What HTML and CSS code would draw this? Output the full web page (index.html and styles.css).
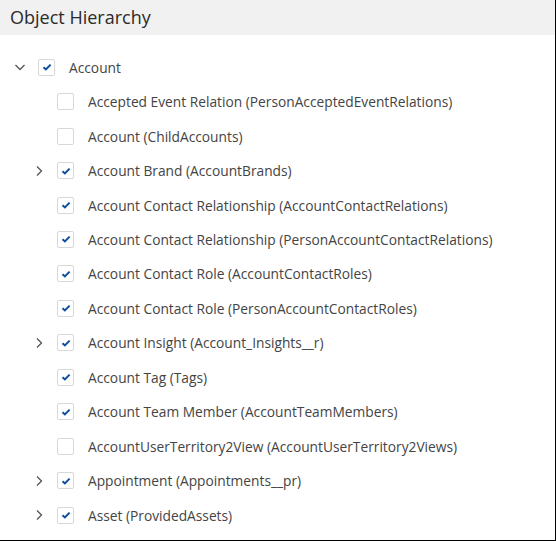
FILE: index.html
```html
<!DOCTYPE html>
<html>
<head>
<meta charset="utf-8">
<link rel="stylesheet" href="styles.css">
</head>
<body>
<div class="panel">
  <div class="header">Object Hierarchy</div>
  <ul class="tree">
    <li class="row root">
      <span class="toggle"><svg width="12" height="12" viewBox="0 0 12 12"><path d="M1.5 4l4.5 4.5L10.5 4" fill="none" stroke="#555" stroke-width="1.3"/></svg></span>
      <span class="cb checked"><svg width="10" height="8" viewBox="0 0 10 8"><path d="M1.5 4.2l2.4 2.2L8.6 1.6" fill="none" stroke="#0b4f9c" stroke-width="2"/></svg></span>
      <span class="label">Account</span>
    </li>
  </ul>
  <ul class="tree children">
    <li class="row"><span class="toggle"></span><span class="cb"></span><span class="label">Accepted Event Relation (PersonAcceptedEventRelations)</span></li>
    <li class="row"><span class="toggle"></span><span class="cb"></span><span class="label">Account (ChildAccounts)</span></li>
    <li class="row"><span class="toggle"><svg width="12" height="12" viewBox="0 0 12 12"><path d="M4 1.5l4.5 4.5L4 10.5" fill="none" stroke="#555" stroke-width="1.3"/></svg></span><span class="cb checked"><svg width="10" height="8" viewBox="0 0 10 8"><path d="M1.5 4.2l2.4 2.2L8.6 1.6" fill="none" stroke="#0b4f9c" stroke-width="2"/></svg></span><span class="label">Account Brand (AccountBrands)</span></li>
    <li class="row"><span class="toggle"></span><span class="cb checked"><svg width="10" height="8" viewBox="0 0 10 8"><path d="M1.5 4.2l2.4 2.2L8.6 1.6" fill="none" stroke="#0b4f9c" stroke-width="2"/></svg></span><span class="label">Account Contact Relationship (AccountContactRelations)</span></li>
    <li class="row"><span class="toggle"></span><span class="cb checked"><svg width="10" height="8" viewBox="0 0 10 8"><path d="M1.5 4.2l2.4 2.2L8.6 1.6" fill="none" stroke="#0b4f9c" stroke-width="2"/></svg></span><span class="label">Account Contact Relationship (PersonAccountContactRelations)</span></li>
    <li class="row"><span class="toggle"></span><span class="cb checked"><svg width="10" height="8" viewBox="0 0 10 8"><path d="M1.5 4.2l2.4 2.2L8.6 1.6" fill="none" stroke="#0b4f9c" stroke-width="2"/></svg></span><span class="label">Account Contact Role (AccountContactRoles)</span></li>
    <li class="row"><span class="toggle"></span><span class="cb checked"><svg width="10" height="8" viewBox="0 0 10 8"><path d="M1.5 4.2l2.4 2.2L8.6 1.6" fill="none" stroke="#0b4f9c" stroke-width="2"/></svg></span><span class="label">Account Contact Role (PersonAccountContactRoles)</span></li>
    <li class="row"><span class="toggle"><svg width="12" height="12" viewBox="0 0 12 12"><path d="M4 1.5l4.5 4.5L4 10.5" fill="none" stroke="#555" stroke-width="1.3"/></svg></span><span class="cb checked"><svg width="10" height="8" viewBox="0 0 10 8"><path d="M1.5 4.2l2.4 2.2L8.6 1.6" fill="none" stroke="#0b4f9c" stroke-width="2"/></svg></span><span class="label">Account Insight (Account_Insights__r)</span></li>
    <li class="row"><span class="toggle"></span><span class="cb checked"><svg width="10" height="8" viewBox="0 0 10 8"><path d="M1.5 4.2l2.4 2.2L8.6 1.6" fill="none" stroke="#0b4f9c" stroke-width="2"/></svg></span><span class="label">Account Tag (Tags)</span></li>
    <li class="row"><span class="toggle"></span><span class="cb checked"><svg width="10" height="8" viewBox="0 0 10 8"><path d="M1.5 4.2l2.4 2.2L8.6 1.6" fill="none" stroke="#0b4f9c" stroke-width="2"/></svg></span><span class="label">Account Team Member (AccountTeamMembers)</span></li>
    <li class="row"><span class="toggle"></span><span class="cb"></span><span class="label">AccountUserTerritory2View (AccountUserTerritory2Views)</span></li>
    <li class="row"><span class="toggle"><svg width="12" height="12" viewBox="0 0 12 12"><path d="M4 1.5l4.5 4.5L4 10.5" fill="none" stroke="#555" stroke-width="1.3"/></svg></span><span class="cb checked"><svg width="10" height="8" viewBox="0 0 10 8"><path d="M1.5 4.2l2.4 2.2L8.6 1.6" fill="none" stroke="#0b4f9c" stroke-width="2"/></svg></span><span class="label">Appointment (Appointments__pr)</span></li>
    <li class="row"><span class="toggle"><svg width="12" height="12" viewBox="0 0 12 12"><path d="M4 1.5l4.5 4.5L4 10.5" fill="none" stroke="#555" stroke-width="1.3"/></svg></span><span class="cb checked"><svg width="10" height="8" viewBox="0 0 10 8"><path d="M1.5 4.2l2.4 2.2L8.6 1.6" fill="none" stroke="#0b4f9c" stroke-width="2"/></svg></span><span class="label">Asset (ProvidedAssets)</span></li>
  </ul>
</div>
</body>
</html>
```
FILE: styles.css
```css
html, body {
  margin: 0;
  padding: 0;
  background: #fff;
}
.panel {
  width: 555px;
  height: 540px;
  border-right: 1px solid #000;
  border-bottom: 1px solid #000;
  overflow: hidden;
  font-family: "Open Sans", "Liberation Sans", sans-serif;
}
.header {
  height: 35px;
  background: #f1f1f1;
  padding-left: 10px;
  font-size: 18px;
  line-height: 35px;
  color: #2b2b2b;
}
.tree {
  list-style: none;
  margin: 0;
  padding: 0;
}
.row {
  display: flex;
  align-items: center;
  height: 34.46px;
  font-size: 13.75px;
  color: #444;
}
.root {
  margin-top: 15px;
  padding-left: 14px;
}
.children .row {
  padding-left: 33px;
}
.toggle {
  width: 12px;
  height: 12px;
  display: flex;
  margin-right: 12px;
}
.cb {
  width: 15px;
  height: 15px;
  border: 1px solid #d8d8d8;
  border-radius: 2px;
  display: flex;
  align-items: center;
  justify-content: center;
  margin-right: 14px;
  background: #fff;
}
.label {
  white-space: nowrap;
}
```
